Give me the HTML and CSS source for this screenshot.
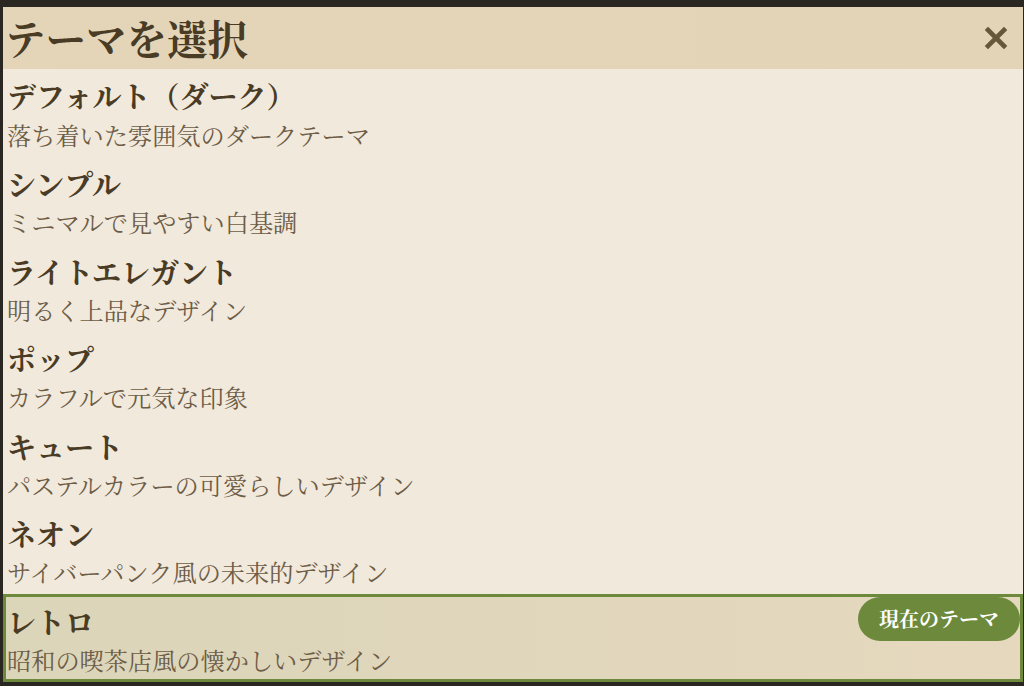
FILE: index.html
```html
<!DOCTYPE html>
<html lang="ja">
<head>
<meta charset="utf-8">
<link rel="stylesheet" href="styles.css">
</head>
<body>
<div class="modal">
  <header class="modal-header">
    <h1 class="modal-title">テーマを選択</h1>
    <button class="close-btn" aria-label="閉じる">
      <svg viewBox="0 0 24 24" width="24" height="24"><path d="M4 4 L20 20 M20 4 L4 20" stroke="#675739" stroke-width="4.6" stroke-linecap="square" fill="none"/></svg>
    </button>
  </header>
  <ul class="theme-list">
    <li class="theme-item">
      <div class="theme-name">デフォルト（ダーク）</div>
      <div class="theme-desc">落ち着いた雰囲気のダークテーマ</div>
    </li>
    <li class="theme-item">
      <div class="theme-name">シンプル</div>
      <div class="theme-desc">ミニマルで見やすい白基調</div>
    </li>
    <li class="theme-item">
      <div class="theme-name">ライトエレガント</div>
      <div class="theme-desc">明るく上品なデザイン</div>
    </li>
    <li class="theme-item">
      <div class="theme-name">ポップ</div>
      <div class="theme-desc">カラフルで元気な印象</div>
    </li>
    <li class="theme-item">
      <div class="theme-name">キュート</div>
      <div class="theme-desc">パステルカラーの可愛らしいデザイン</div>
    </li>
    <li class="theme-item">
      <div class="theme-name">ネオン</div>
      <div class="theme-desc">サイバーパンク風の未来的デザイン</div>
    </li>
    <li class="theme-item is-current">
      <div class="theme-name">レトロ</div>
      <div class="theme-desc">昭和の喫茶店風の懐かしいデザイン</div>
      <span class="current-badge">現在のテーマ</span>
    </li>
  </ul>
</div>
</body>
</html>
```
FILE: styles.css
```css
html, body {
  margin: 0;
  padding: 0;
  height: 100%;
  overflow: hidden;
}
body {
  background: #2a2622;
  padding: 7px 0 0 3px;
  box-sizing: border-box;
  font-family: "Noto Serif CJK JP", "Noto Sans CJK JP", serif;
}
.modal {
  width: 1020px;
  background: #f1e9dc;
}
.modal-header {
  height: 62px;
  background: linear-gradient(to right, #e5d5b8, #e4d4b7);
  display: flex;
  align-items: center;
  justify-content: space-between;
  padding: 0 15px 0 2px;
  box-sizing: border-box;
}
.modal-title {
  margin: 0;
  font-size: 40.5px;
  line-height: 1;
  font-weight: 700;
  color: #4a3b25;
}
.close-btn {
  background: none;
  border: 0;
  padding: 0;
  width: 24px;
  height: 24px;
  display: flex;
}
.theme-list {
  list-style: none;
  margin: 0;
  padding: 0;
}
.theme-item {
  position: relative;
  border: 3px solid transparent;
  padding: 2.4px 1px;
}
.theme-name {
  font-size: 29px;
  line-height: 43.2px;
  font-weight: 700;
  color: #4a3b25;
}
.theme-desc {
  font-size: 24.2px;
  line-height: 33.6px;
  color: #6d5c46;
}
.theme-item.is-current {
  border-color: #6d8a3c;
  background: linear-gradient(to right, #dbd5b9, #e5d8be);
}
.current-badge {
  position: absolute;
  top: 0;
  right: 0;
  background: #6d8a3c;
  color: #fff;
  font-size: 20px;
  line-height: 23px;
  font-weight: 700;
  padding: 10px 21px 11px;
  border-radius: 22px;
}
```
